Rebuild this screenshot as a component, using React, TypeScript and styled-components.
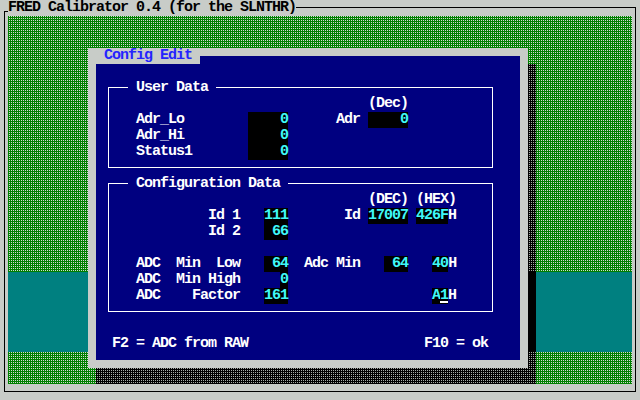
import * as React from "react";
import styled, { createGlobalStyle } from "styled-components";

const GRAY = "#c8ccc8";
const NAVY = "#000080";
const CYAN = "#3ff8f8";

const GlobalStyle = createGlobalStyle`
	html, body {
		margin: 0;
		padding: 0;
		background: ${GRAY};
	}
`;

const Screen = styled.div`
	width: 640px;
	height: 400px;
	display: flex;
	flex-direction: column;
	background: ${GRAY};
	font-family: "Liberation Mono", "DejaVu Sans Mono", monospace;
	font-weight: bold;
	font-size: 15px;
	letter-spacing: -1px;
	line-height: 16px;
	overflow: hidden;
`;

const Header = styled.div`
	display: flex;
	height: 16px;
	flex: none;
`;

const Corner = styled.div`
	width: 4px;
	margin: 11px 0 0 4px;
	border-left: 1px solid #000;
	border-top: 1px solid #000;
	box-sizing: border-box;
`;

const AppTitle = styled.div`
	color: #000;
	white-space: pre;
`;

const TopLine = styled.div`
	flex: 1;
	margin: 7px 4px 0 0;
	border-top: 1px solid #000;
	border-right: 1px solid #000;
`;

const Body = styled.div`
	flex: 1;
	margin: 0 4px 8px 4px;
	border: 1px solid #000;
	border-top: none;
	padding: 0 3px 7px 3px;
	display: flex;
	flex-direction: column;
`;

// wallpaper and dialog share the one grid cell
const Desktop = styled.div`
	display: grid;
	width: 624px;
	height: 368px;

	& > * {
		grid-area: 1 / 1;
	}
`;

const WallSvg = styled.svg`
	display: block;
	shape-rendering: crispEdges;
`;

const DialogSpot = styled.div`
	padding: 32px 0 0 80px;
	align-self: start;
`;

const Dialog = styled.div`
	width: 440px;
	height: 320px;
	box-sizing: border-box;
	background: ${GRAY};
	padding: 0 8px 8px 8px;
	display: flex;
	flex-direction: column;
`;

const DialogHead = styled.div`
	display: flex;
	height: 16px;
	flex: none;
`;

const TitleTab = styled.div`
	width: 104px;
	box-sizing: border-box;
	padding-left: 8px;
	color: #2424ff;
	white-space: pre;
`;

const HeadFill = styled.div`
	flex: 1;
	margin-top: 8px;
	background: ${NAVY};
`;

const Panel = styled.div`
	flex: 1;
	background: ${NAVY};
	color: #fff;
	display: flex;
	flex-direction: column;
`;

const Group = styled.div<{ $top: number }>`
	width: 385px;
	box-sizing: border-box;
	margin: ${p => p.$top}px 0 0 12px;
	border: 1px solid #fff;
	padding: 0 0 7px 3px;
`;

const Line = styled.div`
	height: 16px;
	white-space: pre;
`;

const LegendLine = styled(Line)`
	margin-top: -8px;
`;

const Legend = styled.span`
	display: inline-block;
	height: 16px;
	margin-left: 16px;
	background: ${NAVY};
`;

const Field = styled.span`
	display: inline-block;
	height: 16px;
	vertical-align: top;
	background: #000;
	color: ${CYAN};
`;

const Cursor = styled.span`
	display: inline-block;
	height: 16px;
	vertical-align: top;
	background: linear-gradient(to bottom, #000 13px, #fff 13px, #fff 15px, #000 15px);
`;

const Footer = styled(Line)`
	margin-top: 24px;
	padding-left: 16px;
`;

// shaded green backdrop, teal band, and the dialog's drop shadow
function Wallpaper() {
	return (
		<WallSvg width="624" height="368" viewBox="0 0 624 368">
			<defs>
				<pattern id="shadeGreen" width="2" height="2" patternUnits="userSpaceOnUse">
					<rect width="2" height="2" fill="#008000" />
					<rect x="1" width="1" height="1" fill="#d4d8d4" />
				</pattern>
				<pattern id="shadeDark" width="2" height="2" patternUnits="userSpaceOnUse">
					<rect width="2" height="2" fill="#000" />
					<rect x="1" width="1" height="1" fill="#a8aca8" />
				</pattern>
			</defs>
			<rect width="624" height="368" fill="url(#shadeGreen)" />
			<rect y="256" width="624" height="80" fill="#008080" />
			<rect x="88" y="48" width="440" height="320" fill="url(#shadeDark)" />
			<rect x="88" y="256" width="440" height="80" fill="#000" />
		</WallSvg>
	);
}

export default function App() {
	return (
		<Screen>
			<GlobalStyle />
			<Header>
				<Corner />
				<AppTitle>FRED Calibrator 0.4 (for the SLNTHR)</AppTitle>
				<TopLine />
			</Header>
			<Body>
				<Desktop>
					<Wallpaper />
					<DialogSpot>
						<Dialog>
							<DialogHead>
								<TitleTab>Config Edit</TitleTab>
								<HeadFill />
							</DialogHead>
							<Panel>
								<Group $top={23}>
									<LegendLine><Legend> User Data </Legend></LegendLine>
									<Line>{"                                (Dec)"}</Line>
									<Line>
										{"   Adr_Lo        "}<Field>{"    0"}</Field>
										{"      Adr "}<Field>{"    0"}</Field>
									</Line>
									<Line>{"   Adr_Hi        "}<Field>{"    0"}</Field></Line>
									<Line>{"   Status1       "}<Field>{"    0"}</Field></Line>
								</Group>
								<Group $top={15}>
									<LegendLine><Legend> Configuration Data </Legend></LegendLine>
									<Line>{"                                (DEC) (HEX)"}</Line>
									<Line>
										{"            Id 1   "}<Field>111</Field>
										{"       Id "}<Field>17007</Field>{" "}<Field>426F</Field>H
									</Line>
									<Line>{"            Id 2   "}<Field>{" 66"}</Field></Line>
									<Line />
									<Line>
										{"   ADC  Min  Low   "}<Field>{" 64"}</Field>
										{"  Adc Min   "}<Field>{" 64"}</Field>
										{"   "}<Field>40</Field>H
									</Line>
									<Line>{"   ADC  Min High     "}<Field>0</Field></Line>
									<Line>
										{"   ADC    Factor   "}<Field>161</Field>
										{"                  "}<Field>A<Cursor>1</Cursor></Field>H
									</Line>
								</Group>
								<Footer>{"F2 = ADC from RAW                      F10 = ok"}</Footer>
							</Panel>
						</Dialog>
					</DialogSpot>
				</Desktop>
			</Body>
		</Screen>
	);
}
